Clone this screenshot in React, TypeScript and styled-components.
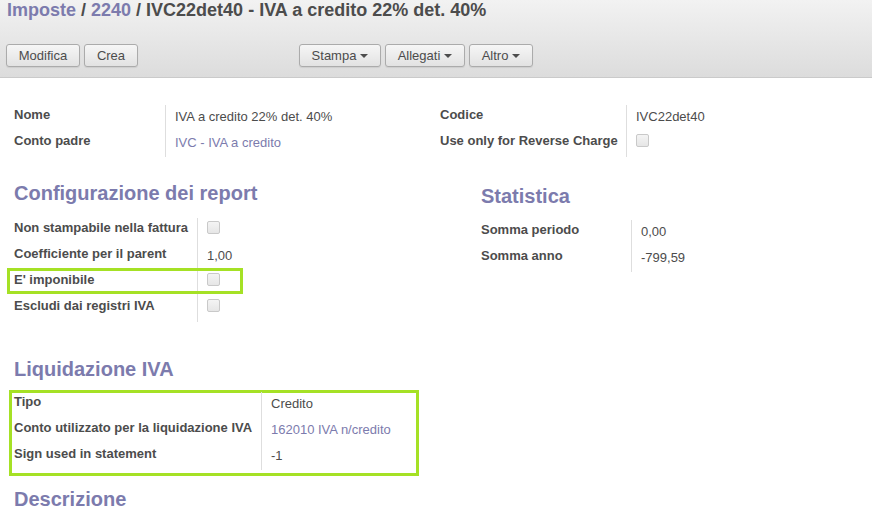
import React from "react";
import styled, { createGlobalStyle } from "styled-components";

const GlobalStyle = createGlobalStyle`
  html, body { margin: 0; padding: 0; background: #fff; }
  body {
    font-family: "Liberation Sans", Arial, Helvetica, sans-serif;
    font-size: 13px;
    color: #4c4c4c;
  }
`;

const Header = styled.div`
  height: 77px;
  border-bottom: 1px solid #cacaca;
  background: linear-gradient(#f2f2f2, #dcdcdc);
  padding: 0 6px;
  box-sizing: content-box;
`;

const Title = styled.h2`
  margin: 0 0 0 1px;
  font-size: 18px;
  line-height: 21px;
  font-weight: bold;
  color: #4c4c4c;
  white-space: nowrap;
`;

const Crumb = styled.span`
  color: #7c7bad;
`;

const Toolbar = styled.div`
  display: flex;
  align-items: center;
  margin-top: 23px;
`;

const ButtonGroup = styled.div<{ $offset?: number }>`
  display: flex;
  gap: 4px;
  margin-left: ${(p) => p.$offset ?? 0}px;
`;

const Button = styled.button<{ $w: number }>`
  width: ${(p) => p.$w}px;
  height: 23px;
  padding: 0;
  border: 1px solid #ababab;
  border-radius: 3px;
  background: linear-gradient(#f6f6f6, #e2e2e2);
  box-shadow: 0 1px 1px rgba(0, 0, 0, 0.08);
  font-family: inherit;
  font-size: 13px;
  color: #4c4c4c;
  display: flex;
  align-items: center;
  justify-content: center;
  gap: 4px;
`;

const Caret = styled.span`
  width: 0;
  height: 0;
  border-left: 4px solid transparent;
  border-right: 4px solid transparent;
  border-top: 4px solid #4c4c4c;
  margin-top: 1px;
`;

const Sheet = styled.div`
  padding: 27px 14px 0 14px;
`;

const Columns = styled.div<{ $left: number }>`
  display: grid;
  grid-template-columns: ${(p) => p.$left}px 1fr;
  align-items: start;
`;

const Group = styled.div<{ $label: number; $indent?: number; $shift?: number }>`
  display: grid;
  grid-template-columns: ${(p) => p.$label}px auto;
  justify-content: start;
  margin-left: ${(p) => p.$indent ?? 0}px;
  margin-top: ${(p) => p.$shift ?? 0}px;
`;

const Label = styled.div`
  height: 26px;
  line-height: 20px;
  font-weight: bold;
  color: #4c4c4c;
  white-space: nowrap;
`;

const Value = styled.div`
  height: 26px;
  line-height: 22px;
  padding-left: 9px;
  border-left: 1px solid #dedede;
  color: #4c4c4c;
  white-space: nowrap;
  display: flex;
  align-items: center;
  & > span {
    position: relative;
    top: -1px;
  }
`;

const Link = styled.span`
  color: #7c7bad;
`;

const Check = styled.span`
  display: inline-block;
  width: 11px;
  height: 11px;
  border: 1px solid #c9c9c9;
  border-radius: 2px;
  background: linear-gradient(#f4f4f4, #e6e6e6);
  margin-top: -5px;
`;

const Heading = styled.h3<{ $indent?: number; $mt: number; $mb: number }>`
  margin: ${(p) => p.$mt}px 0 ${(p) => p.$mb}px ${(p) => p.$indent ?? 0}px;
  font-size: 20px;
  line-height: 24px;
  font-weight: bold;
  color: #7c7bad;
  white-space: nowrap;
`;

const LiqBox = styled.div`
  margin-left: -5px;
  width: 410px;
  border: 3px solid #a5e125;
  box-sizing: border-box;
  padding: 0 0 3px 2px;
`;

type Row = { label: string; value?: React.ReactNode; check?: boolean };

function Rows({ rows }: { rows: Row[] }) {
  return (
    <>
      {rows.map((r) => (
        <React.Fragment key={r.label}>
          <Label>{r.label}</Label>
          <Value>{r.check ? <Check /> : <span>{r.value}</span>}</Value>
        </React.Fragment>
      ))}
    </>
  );
}

const ConfigWrap = styled.div`
  position: relative;
`;

const Outline = styled.div`
  position: absolute;
  left: -7px;
  top: 50px;
  width: 236px;
  height: 26px;
  border: 3px solid #a5e125;
  box-sizing: border-box;
  pointer-events: none;
`;

export default function App() {
  return (
    <>
      <GlobalStyle />
      <Header>
        <Title>
          <Crumb>Imposte</Crumb> / <Crumb>2240</Crumb> / IVC22det40 - IVA a credito 22% det. 40%
        </Title>
        <Toolbar>
          <ButtonGroup>
            <Button $w={74}>Modifica</Button>
            <Button $w={54}>Crea</Button>
          </ButtonGroup>
          <ButtonGroup $offset={161}>
            <Button $w={82}>
              Stampa <Caret />
            </Button>
            <Button $w={80}>
              Allegati <Caret />
            </Button>
            <Button $w={64}>
              Altro <Caret />
            </Button>
          </ButtonGroup>
        </Toolbar>
      </Header>
      <Sheet>
        <Columns $left={426}>
          <Group $label={151}>
            <Rows
              rows={[
                { label: "Nome", value: "IVA a credito 22% det. 40%" },
                { label: "Conto padre", value: <Link>IVC - IVA a credito</Link> },
              ]}
            />
          </Group>
          <Group $label={186}>
            <Rows
              rows={[
                { label: "Codice", value: "IVC22det40" },
                { label: "Use only for Reverse Charge", check: true },
              ]}
            />
          </Group>
        </Columns>
        <Columns $left={426}>
          <div>
            <Heading $mt={24} $mb={13}>
              Configurazione dei report
            </Heading>
            <ConfigWrap>
              <Group $label={183}>
                <Rows
                  rows={[
                    { label: "Non stampabile nella fattura", check: true },
                    { label: "Coefficiente per il parent", value: "1,00" },
                    { label: "E' imponibile", check: true },
                    { label: "Escludi dai registri IVA", check: true },
                  ]}
                />
              </Group>
              <Outline />
            </ConfigWrap>
          </div>
          <div>
            <Heading $indent={41} $mt={27} $mb={12}>
              Statistica
            </Heading>
            <Group $label={150} $indent={41}>
              <Rows
                rows={[
                  { label: "Somma periodo", value: "0,00" },
                  { label: "Somma anno", value: "-799,59" },
                ]}
              />
            </Group>
          </div>
        </Columns>
        <Heading $mt={35} $mb={9}>
          Liquidazione IVA
        </Heading>
        <LiqBox>
          <Group $label={247} $shift={-1}>
            <Rows
              rows={[
                { label: "Tipo", value: "Credito" },
                {
                  label: "Conto utilizzato per la liquidazione IVA",
                  value: <Link>162010 IVA n/credito</Link>,
                },
                { label: "Sign used in statement", value: "-1" },
              ]}
            />
          </Group>
        </LiqBox>
        <Heading $mt={11} $mb={0}>
          Descrizione
        </Heading>
      </Sheet>
    </>
  );
}
